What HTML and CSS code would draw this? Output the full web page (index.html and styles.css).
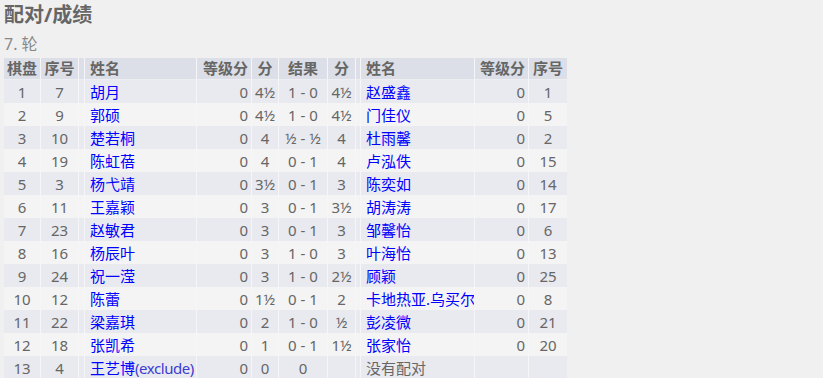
FILE: index.html
```html
<!DOCTYPE html>
<html lang="zh">
<head>
<meta charset="utf-8">
<title>配对/成绩</title>
<link rel="stylesheet" href="styles.css">
</head>
<body>
<h1 class="title">配对/成绩</h1>
<h2 class="round">7. 轮</h2>
<table class="pairs">
  <colgroup>
    <col class="c-board"><col class="c-no"><col class="c-sp">
    <col class="c-name"><col class="c-rtg"><col class="c-pts">
    <col class="c-res"><col class="c-pts2"><col class="c-sp2">
    <col class="c-name2"><col class="c-rtg2"><col class="c-no2">
  </colgroup>
  <thead>
    <tr>
      <th class="ctr">棋盘</th><th class="ctr">序号</th><th></th>
      <th class="lft">姓名</th><th class="rgt">等级分</th><th class="ctr">分</th>
      <th class="ctr">结果</th><th class="ctr">分</th><th></th>
      <th class="lft">姓名</th><th class="rgt">等级分</th><th class="ctr">序号</th>
    </tr>
  </thead>
  <tbody>
    <tr><td class="ctr">1</td><td class="ctr">7</td><td></td><td class="lft"><a href="#">胡月</a></td><td class="rgt">0</td><td class="ctr">4½</td><td class="ctr">1 - 0</td><td class="ctr">4½</td><td></td><td class="lft"><a href="#">赵盛鑫</a></td><td class="rgt">0</td><td class="ctr">1</td></tr>
    <tr><td class="ctr">2</td><td class="ctr">9</td><td></td><td class="lft"><a href="#">郭硕</a></td><td class="rgt">0</td><td class="ctr">4½</td><td class="ctr">1 - 0</td><td class="ctr">4½</td><td></td><td class="lft"><a href="#">门佳仪</a></td><td class="rgt">0</td><td class="ctr">5</td></tr>
    <tr><td class="ctr">3</td><td class="ctr">10</td><td></td><td class="lft"><a href="#">楚若桐</a></td><td class="rgt">0</td><td class="ctr">4</td><td class="ctr">½ - ½</td><td class="ctr">4</td><td></td><td class="lft"><a href="#">杜雨馨</a></td><td class="rgt">0</td><td class="ctr">2</td></tr>
    <tr><td class="ctr">4</td><td class="ctr">19</td><td></td><td class="lft"><a href="#">陈虹蓓</a></td><td class="rgt">0</td><td class="ctr">4</td><td class="ctr">0 - 1</td><td class="ctr">4</td><td></td><td class="lft"><a href="#">卢泓佚</a></td><td class="rgt">0</td><td class="ctr">15</td></tr>
    <tr><td class="ctr">5</td><td class="ctr">3</td><td></td><td class="lft"><a href="#">杨弋靖</a></td><td class="rgt">0</td><td class="ctr">3½</td><td class="ctr">0 - 1</td><td class="ctr">3</td><td></td><td class="lft"><a href="#">陈奕如</a></td><td class="rgt">0</td><td class="ctr">14</td></tr>
    <tr><td class="ctr">6</td><td class="ctr">11</td><td></td><td class="lft"><a href="#">王嘉颖</a></td><td class="rgt">0</td><td class="ctr">3</td><td class="ctr">0 - 1</td><td class="ctr">3½</td><td></td><td class="lft"><a href="#">胡涛涛</a></td><td class="rgt">0</td><td class="ctr">17</td></tr>
    <tr><td class="ctr">7</td><td class="ctr">23</td><td></td><td class="lft"><a href="#">赵敏君</a></td><td class="rgt">0</td><td class="ctr">3</td><td class="ctr">0 - 1</td><td class="ctr">3</td><td></td><td class="lft"><a href="#">邹馨怡</a></td><td class="rgt">0</td><td class="ctr">6</td></tr>
    <tr><td class="ctr">8</td><td class="ctr">16</td><td></td><td class="lft"><a href="#">杨辰叶</a></td><td class="rgt">0</td><td class="ctr">3</td><td class="ctr">1 - 0</td><td class="ctr">3</td><td></td><td class="lft"><a href="#">叶海怡</a></td><td class="rgt">0</td><td class="ctr">13</td></tr>
    <tr><td class="ctr">9</td><td class="ctr">24</td><td></td><td class="lft"><a href="#">祝一滢</a></td><td class="rgt">0</td><td class="ctr">3</td><td class="ctr">1 - 0</td><td class="ctr">2½</td><td></td><td class="lft"><a href="#">顾颖</a></td><td class="rgt">0</td><td class="ctr">25</td></tr>
    <tr><td class="ctr">10</td><td class="ctr">12</td><td></td><td class="lft"><a href="#">陈蕾</a></td><td class="rgt">0</td><td class="ctr">1½</td><td class="ctr">0 - 1</td><td class="ctr">2</td><td></td><td class="lft"><a href="#">卡地热亚.乌买尔</a></td><td class="rgt">0</td><td class="ctr">8</td></tr>
    <tr><td class="ctr">11</td><td class="ctr">22</td><td></td><td class="lft"><a href="#">梁嘉琪</a></td><td class="rgt">0</td><td class="ctr">2</td><td class="ctr">1 - 0</td><td class="ctr">½</td><td></td><td class="lft"><a href="#">彭凌微</a></td><td class="rgt">0</td><td class="ctr">21</td></tr>
    <tr><td class="ctr">12</td><td class="ctr">18</td><td></td><td class="lft"><a href="#">张凯希</a></td><td class="rgt">0</td><td class="ctr">1</td><td class="ctr">0 - 1</td><td class="ctr">1½</td><td></td><td class="lft"><a href="#">张家怡</a></td><td class="rgt">0</td><td class="ctr">20</td></tr>
    <tr><td class="ctr">13</td><td class="ctr">4</td><td></td><td class="lft"><a href="#">王艺博<span class="excl">(exclude)</span></a></td><td class="rgt">0</td><td class="ctr">0</td><td class="ctr">0</td><td class="ctr"></td><td></td><td class="lft muted">没有配对</td><td class="rgt"></td><td class="ctr"></td></tr>
  </tbody>
</table>
</body>
</html>
```
FILE: styles.css
```css
html, body {
  margin: 0;
  padding: 0;
  background: #f0f0f0;
}
body {
  padding: 0 4px;
  font-family: "Noto Sans", "Noto Sans CJK SC", sans-serif;
  color: #666;
}
.title {
  margin: 3px 0 0;
  font-size: 20px;
  line-height: 24px;
  font-weight: bold;
  color: #666;
}
.round {
  margin: 5px 0 0;
  font-size: 16px;
  line-height: 24px;
  font-weight: normal;
  color: #888;
}
.pairs {
  margin-top: 2px;
  border-collapse: separate;
  border-spacing: 0;
  table-layout: fixed;
  width: 563px;
  font-size: 15px;
}
.c-board { width: 37px; }
.c-no { width: 38px; }
.c-sp { width: 6px; }
.c-name { width: 112px; }
.c-rtg { width: 55px; }
.c-pts { width: 27px; }
.c-res { width: 49px; }
.c-pts2 { width: 28px; }
.c-sp2 { width: 5px; }
.c-name2 { width: 114px; }
.c-rtg2 { width: 54px; }
.c-no2 { width: 38px; }

.pairs th, .pairs td {
  padding: 0 3px;
  white-space: nowrap;
  overflow: hidden;
  border-right: 1px solid #f6f6f8;
  box-sizing: border-box;
}
.pairs th:last-child, .pairs td:last-child {
  border-right: none;
}
.pairs th {
  height: 22px;
  line-height: 21px;
  background: #dcdfe7;
  font-weight: bold;
  color: #666;
  border-bottom: 1px solid #eceef2;
}
.pairs td {
  height: 23px;
  line-height: 22px;
  color: #666;
}
.pairs tbody tr:nth-child(odd) td { background: #e9eaf0; }
.pairs tbody tr:nth-child(even) td { background: #f4f4f4; }
.ctr { text-align: center; }
.lft { text-align: left; }
.pairs .lft { padding-left: 5px; }
.rgt { text-align: right; }
.pairs a {
  color: #0000ff;
  text-decoration: none;
}
.excl {
  color: #3c3cd0;
  letter-spacing: -0.45px;
}
.muted { color: #777; }
```
